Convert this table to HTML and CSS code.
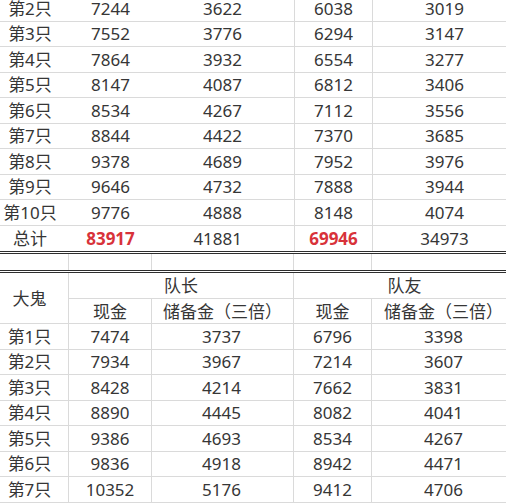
FILE: index.html
```html
<!DOCTYPE html>
<html lang="zh">
<head>
<meta charset="utf-8">
<link rel="stylesheet" href="styles.css">
</head>
<body>
<div class="sheet">
  <div class="grid top">
    <div class="c lab">第2只</div><div class="c">7244</div><div class="c r">3622</div><div class="c vl">6038</div><div class="c vl">3019</div>
    <div class="c lab">第3只</div><div class="c">7552</div><div class="c r">3776</div><div class="c vl">6294</div><div class="c vl">3147</div>
    <div class="c lab">第4只</div><div class="c">7864</div><div class="c r">3932</div><div class="c vl">6554</div><div class="c vl">3277</div>
    <div class="c lab">第5只</div><div class="c">8147</div><div class="c r">4087</div><div class="c vl">6812</div><div class="c vl">3406</div>
    <div class="c lab">第6只</div><div class="c">8534</div><div class="c r">4267</div><div class="c vl">7112</div><div class="c vl">3556</div>
    <div class="c lab">第7只</div><div class="c">8844</div><div class="c r">4422</div><div class="c vl">7370</div><div class="c vl">3685</div>
    <div class="c lab">第8只</div><div class="c">9378</div><div class="c r">4689</div><div class="c vl">7952</div><div class="c vl">3976</div>
    <div class="c lab">第9只</div><div class="c">9646</div><div class="c r">4732</div><div class="c vl">7888</div><div class="c vl">3944</div>
    <div class="c lab">第10只</div><div class="c">9776</div><div class="c r">4888</div><div class="c vl">8148</div><div class="c vl">4074</div>
    <div class="c lab last">总计</div><div class="c last total">83917</div><div class="c r last">41881</div><div class="c vl last total">69946</div><div class="c vl last">34973</div>
  </div>

  <div class="grid gap">
    <div class="c g"></div><div class="c g"></div><div class="c g"></div><div class="c g"></div><div class="c g"></div>
  </div>

  <div class="grid bottom">
    <div class="c lab boss">大鬼</div>
    <div class="c team t1">队长</div>
    <div class="c team t2">队友</div>
    <div class="c hd">现金</div><div class="c hd">储备金（三倍）</div><div class="c hd">现金</div><div class="c hd">储备金（三倍）</div>

    <div class="c lab">第1只</div><div class="c">7474</div><div class="c r">3737</div><div class="c">6796</div><div class="c">3398</div>
    <div class="c lab">第2只</div><div class="c">7934</div><div class="c r">3967</div><div class="c">7214</div><div class="c">3607</div>
    <div class="c lab">第3只</div><div class="c">8428</div><div class="c r">4214</div><div class="c">7662</div><div class="c">3831</div>
    <div class="c lab">第4只</div><div class="c">8890</div><div class="c r">4445</div><div class="c">8082</div><div class="c">4041</div>
    <div class="c lab">第5只</div><div class="c">9386</div><div class="c r">4693</div><div class="c">8534</div><div class="c">4267</div>
    <div class="c lab">第6只</div><div class="c">9836</div><div class="c r">4918</div><div class="c">8942</div><div class="c">4471</div>
    <div class="c lab">第7只</div><div class="c">10352</div><div class="c r">5176</div><div class="c">9412</div><div class="c">4706</div>
  </div>
</div>
</body>
</html>
```
FILE: styles.css
```css
* { box-sizing: border-box; }

html, body {
  margin: 0;
  padding: 0;
  background: #ffffff;
  overflow: hidden;
}

.sheet {
  width: 525px;
  margin-left: -9px;
  margin-top: -4px;
  font-family: "Noto Sans", "Noto Sans CJK SC", sans-serif;
  font-size: 17px;
  color: #363636;
}

.grid {
  display: grid;
  grid-template-columns: 78px 83px 142px 78px 144px;
  grid-auto-rows: 25.5px;
}

.c {
  display: flex;
  align-items: center;
  justify-content: center;
  border-bottom: 1px solid #dadada;
  white-space: nowrap;
  line-height: 1;
}

.r {
  justify-content: flex-end;
  padding-right: 52px;
}

.top .vl { border-left: 1px solid #dadada; }

.top .last { border-bottom: none; }

.total {
  color: #d8323a;
  font-weight: 700;
}

.gap {
  grid-auto-rows: 16px;
  border-top: 3px double #2e2e2e;
  border-bottom: 3px double #2e2e2e;
}

.gap .g {
  border-bottom: none;
  border-right: 1px solid #dadada;
}

.bottom .c {
  border-right: 1px solid #dadada;
}

.boss {
  grid-row: span 2;
}

.team.t1 { grid-column: 2 / 4; }
.team.t2 { grid-column: 4 / 6; }

.hd { padding-top: 1px; }
```
